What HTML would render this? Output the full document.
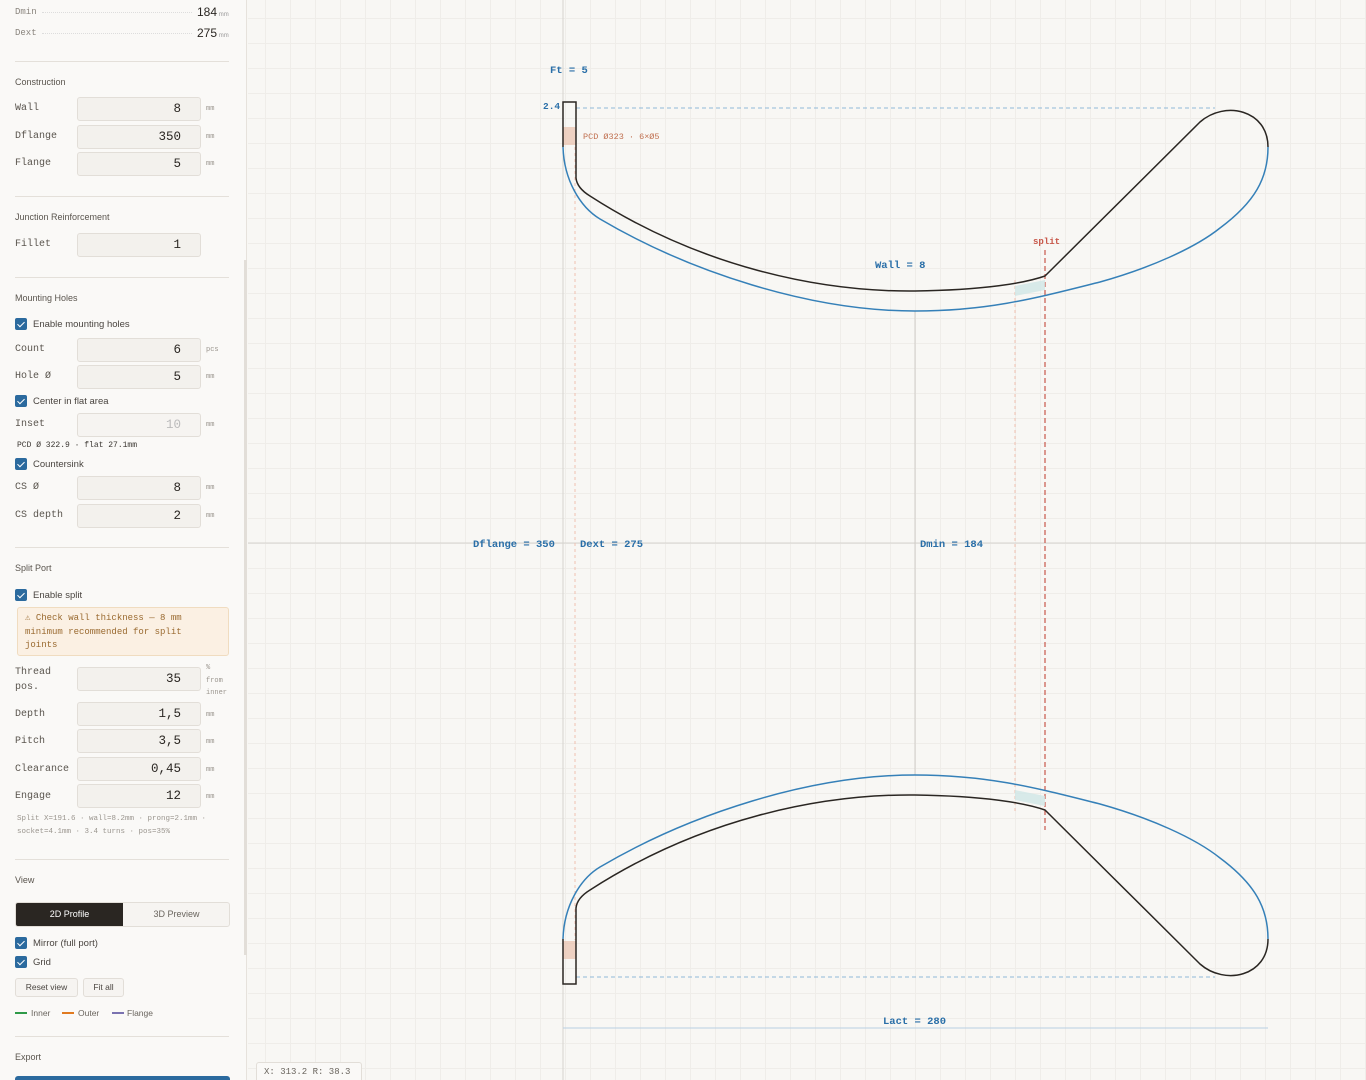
<!DOCTYPE html>
<html><head><meta charset="utf-8"><style>
*{box-sizing:border-box;margin:0;padding:0}
html,body{width:1366px;height:1080px;overflow:hidden}
body{background:#f8f7f4;font-family:"Liberation Sans",sans-serif;position:relative;color:#3a3631}
#side{position:absolute;left:0;top:0;width:247px;height:1080px;background:#faf9f7;border-right:1px solid #e6e2dc}
#canvas{position:absolute;left:248px;top:0;width:1118px;height:1080px;background-color:#f8f7f4;
background-image:linear-gradient(to right,#efede9 1px,transparent 1px),linear-gradient(to bottom,#efede9 1px,transparent 1px);
background-size:25px 25px;background-position:17px 18px}
.a{position:absolute}
.lbl{position:absolute;left:15px;font-family:"Liberation Mono",monospace;font-size:10px;color:#5a554e}
.hd{position:absolute;left:15px;font-size:9px;color:#5a554e}
.hr{position:absolute;left:15px;width:214px;height:1px;background:#e4e0da}
.in{position:absolute;left:77px;width:124px;height:24px;background:#f3f1ed;border:1px solid #e2ded8;border-radius:3px;text-align:right;padding-right:19px;font-family:"Liberation Mono",monospace;font-size:12.5px;line-height:22px;color:#2a2622}
.u{position:absolute;left:206px;font-size:7px;color:#9a958e;font-family:"Liberation Mono",monospace}
.cb{position:absolute;left:15px;width:12px;height:12px;background:#2b6a9e;border-radius:2px}
.cb:after{content:"";position:absolute;left:4px;top:1.5px;width:3px;height:6px;border:solid #fff;border-width:0 1.6px 1.6px 0;transform:rotate(45deg)}
.ct{position:absolute;left:33px;font-size:9.5px;color:#4a4540}
.mono{font-family:"Liberation Mono",monospace}
</style></head><body>
<div id="side">
<div class="lbl" style="top:7px;font-size:9px;color:#8a857e">Dmin</div>
<div class="a" style="left:42px;top:12px;width:150px;border-top:1px dotted #ddd"></div>
<div class="a" style="left:197px;top:5px;font-size:12px;color:#2a2622">184<span style="font-size:6px;color:#999"> mm</span></div>
<div class="lbl" style="top:28px;font-size:9px;color:#8a857e">Dext</div>
<div class="a" style="left:42px;top:33px;width:150px;border-top:1px dotted #ddd"></div>
<div class="a" style="left:197px;top:26px;font-size:12px;color:#2a2622">275<span style="font-size:6px;color:#999"> mm</span></div>
<div class="hr" style="top:61px"></div>
<div class="hd" style="top:77px">Construction</div>
<div class="lbl" style="top:103px">Wall</div><div class="in" style="top:97px">8</div><div class="u" style="top:105px">mm</div>
<div class="lbl" style="top:131px">Dflange</div><div class="in" style="top:125px">350</div><div class="u" style="top:133px">mm</div>
<div class="lbl" style="top:158px">Flange</div><div class="in" style="top:152px">5</div><div class="u" style="top:160px">mm</div>
<div class="hr" style="top:196px"></div>
<div class="hd" style="top:212px">Junction Reinforcement</div>
<div class="lbl" style="top:239px">Fillet</div><div class="in" style="top:233px">1</div>
<div class="hr" style="top:277px"></div>
<div class="hd" style="top:293px">Mounting Holes</div>
<div class="cb" style="top:318px"></div><div class="ct" style="top:319px">Enable mounting holes</div>
<div class="lbl" style="top:344px">Count</div><div class="in" style="top:338px">6</div><div class="u" style="top:346px">pcs</div>
<div class="lbl" style="top:371px">Hole Ø</div><div class="in" style="top:365px">5</div><div class="u" style="top:373px">mm</div>
<div class="cb" style="top:395px"></div><div class="ct" style="top:396px">Center in flat area</div>
<div class="lbl" style="top:419px">Inset</div><div class="in" style="top:413px;color:#bbb;background:#f6f4f1">10</div><div class="u" style="top:421px">mm</div>
<div class="a mono" style="left:17px;top:441px;font-size:8px;color:#3a3631">PCD Ø 322.9 · flat 27.1mm</div>
<div class="cb" style="top:458px"></div><div class="ct" style="top:459px">Countersink</div>
<div class="lbl" style="top:482px">CS Ø</div><div class="in" style="top:476px">8</div><div class="u" style="top:484px">mm</div>
<div class="lbl" style="top:510px">CS depth</div><div class="in" style="top:504px">2</div><div class="u" style="top:512px">mm</div>
<div class="hr" style="top:547px"></div>
<div class="hd" style="top:563px">Split Port</div>
<div class="cb" style="top:589px"></div><div class="ct" style="top:590px">Enable split</div>
<div class="a mono" style="left:17px;top:607px;width:212px;height:49px;background:#fbf0e3;border:1px solid #f0dcc0;border-radius:3px;padding:4px 16px 4px 7px;font-size:9px;line-height:13.5px;color:#9a6a30">⚠ Check wall thickness — 8 mm minimum recommended for split joints</div>
<div class="lbl" style="top:665px;line-height:15px">Thread<br>pos.</div><div class="in" style="top:667px">35</div>
<div class="u" style="top:662px;line-height:12.5px">%<br>from<br>inner</div>
<div class="lbl" style="top:709px">Depth</div><div class="in" style="top:702px">1,5</div><div class="u" style="top:711px">mm</div>
<div class="lbl" style="top:736px">Pitch</div><div class="in" style="top:729px">3,5</div><div class="u" style="top:738px">mm</div>
<div class="lbl" style="top:764px">Clearance</div><div class="in" style="top:757px">0,45</div><div class="u" style="top:766px">mm</div>
<div class="lbl" style="top:791px">Engage</div><div class="in" style="top:784px">12</div><div class="u" style="top:793px">mm</div>
<div class="a mono" style="left:17px;top:813px;font-size:7.5px;line-height:13px;color:#9a958e">Split X=191.6 · wall=8.2mm · prong=2.1mm ·<br>socket=4.1mm · 3.4 turns · pos=35%</div>
<div class="hr" style="top:859px"></div>
<div class="hd" style="top:875px">View</div>
<div class="a" style="left:15px;top:902px;width:215px;height:25px;border:1px solid #e2ded8;border-radius:3px;background:#f6f4f1;overflow:hidden">
<div class="a" style="left:0;top:0;width:107px;height:23px;background:#2a2622;color:#fff;font-size:9px;text-align:center;line-height:23px">2D Profile</div>
<div class="a" style="left:107px;top:0;width:107px;height:23px;color:#6a655e;font-size:9px;text-align:center;line-height:23px">3D Preview</div></div>
<div class="cb" style="top:937px"></div><div class="ct" style="top:938px">Mirror (full port)</div>
<div class="cb" style="top:956px"></div><div class="ct" style="top:957px">Grid</div>
<div class="a" style="left:15px;top:978px;width:63px;height:19px;border:1px solid #e2ded8;border-radius:3px;background:#f6f4f1;font-size:8.5px;text-align:center;line-height:17px;color:#4a4540">Reset view</div>
<div class="a" style="left:83px;top:978px;width:41px;height:19px;border:1px solid #e2ded8;border-radius:3px;background:#f6f4f1;font-size:8.5px;text-align:center;line-height:17px;color:#4a4540">Fit all</div>
<div class="a" style="left:15px;top:1012px;width:12px;height:2px;background:#2e9a48"></div><div class="a" style="left:31px;top:1008px;font-size:8.5px;color:#6a655e">Inner</div>
<div class="a" style="left:62px;top:1012px;width:12px;height:2px;background:#e07a20"></div><div class="a" style="left:78px;top:1008px;font-size:8.5px;color:#6a655e">Outer</div>
<div class="a" style="left:112px;top:1012px;width:12px;height:2px;background:#7a72b0"></div><div class="a" style="left:127px;top:1008px;font-size:8.5px;color:#6a655e">Flange</div>
<div class="hr" style="top:1036px"></div>
<div class="hd" style="top:1052px">Export</div>
<div class="a" style="left:15px;top:1076px;width:215px;height:4px;background:#2b6a9e;border-radius:3px 3px 0 0"></div>
<div class="a" style="left:244px;top:260px;width:3px;height:695px;background:#e2ded8"></div>
</div>
<div id="canvas"></div>
<svg class="a" style="left:0;top:0" width="1366" height="1080" font-family="Liberation Mono, monospace">
<line x1="563" y1="0" x2="563" y2="1080" stroke="#d6d3ce"/>
<line x1="248" y1="543" x2="1366" y2="543" stroke="#d6d3ce"/>
<line x1="915" y1="311" x2="915" y2="775" stroke="#cfccc7"/>
<line x1="576" y1="108" x2="1215" y2="108" stroke="#8fb8d8" stroke-dasharray="4 3"/>
<line x1="576" y1="977" x2="1215" y2="977" stroke="#8fb8d8" stroke-dasharray="4 3"/>
<line x1="575" y1="147" x2="575" y2="940" stroke="#f0c0b0" stroke-dasharray="3 3"/>
<line x1="1015" y1="280" x2="1015" y2="812" stroke="#f0c0b0" stroke-dasharray="3 3"/>
<line x1="1045" y1="250" x2="1045" y2="830" stroke="#c8584a" stroke-width="1.2" stroke-dasharray="5 3"/>
<line x1="563" y1="1028" x2="1268" y2="1028" stroke="#b8cfe2"/>
<g id="top">
<rect x="563" y="127" width="13" height="18" fill="#e8b8a0" opacity="0.6"/>
<path d="M1015,286 L1045,280 L1045,290 L1015,296Z" fill="#cfe6e6" opacity="0.8"/>
<path d="M563,147 L563,102 L576,102 L576,178 Q577,188 590,196 C700,267 820,292 915,291 C985,290 1025,283 1045,276 L1200,122 C1225,100 1268,110 1268,147" fill="none" stroke="#2a2622" stroke-width="1.5"/>
<path d="M563,147 C564,180 580,207 600,219 C690,272 810,311 915,311 C990,311 1040,297 1100,282 C1150,268 1195,248 1220,228 C1255,202 1268,178 1268,147" fill="none" stroke="#3580b8" stroke-width="1.5"/>
</g>
<use href="#top" transform="matrix(1,0,0,-1,0,1086)"/>
<g font-weight="bold" font-size="10.5" fill="#2a6fa8">
<text x="550" y="73">Ft = 5</text>
<text x="543" y="109" font-size="9.5">2.4</text>
<text x="875" y="268">Wall = 8</text>
<text x="473" y="547">Dflange = 350</text>
<text x="580" y="547">Dext = 275</text>
<text x="920" y="547">Dmin = 184</text>
<text x="883" y="1024">Lact = 280</text>
<text x="1033" y="244" font-size="9" fill="#c8584a">split</text>
</g>
<text x="583" y="139" font-size="8.5" fill="#c07050">PCD Ø323 · 6×Ø5</text>
</svg>
<div class="a mono" style="left:256px;top:1062px;width:106px;height:18px;background:#faf9f7;border:1px solid #e2ded8;border-bottom:none;border-radius:3px 3px 0 0;font-size:9px;color:#6a655e;padding:4px 7px">X: 313.2 R: 38.3</div>
</body></html>
